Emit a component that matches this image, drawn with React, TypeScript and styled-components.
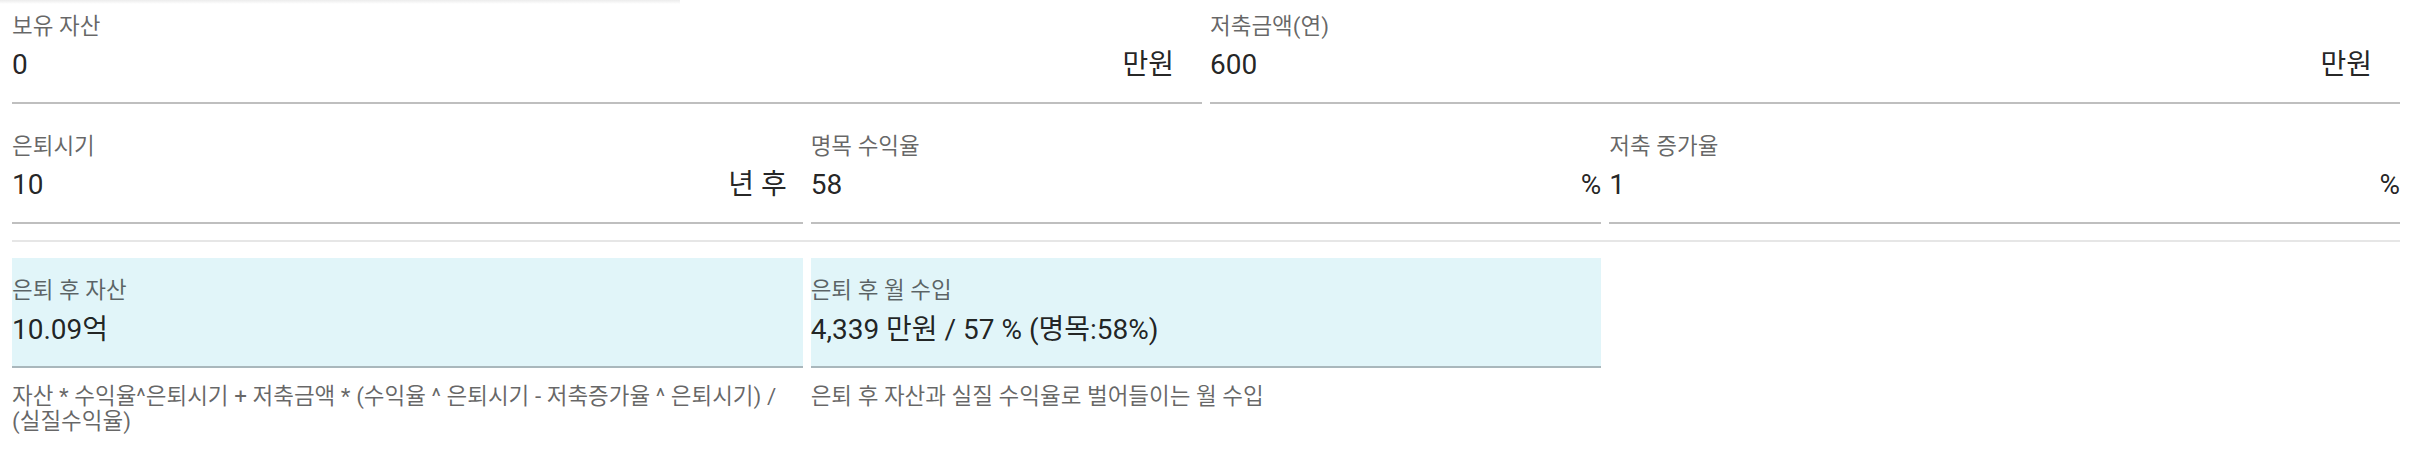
import React from "react";
import styled, { createGlobalStyle } from "styled-components";

const GlobalStyle = createGlobalStyle`
  html, body {
    margin: 0;
    padding: 0;
    background: #ffffff;
  }
  body {
    font-family: Roboto, "Noto Sans CJK KR", "Noto Sans", sans-serif;
    color: rgba(0, 0, 0, 0.87);
  }
`;

const Page = styled.div`
  position: relative;
  width: 2424px;
  box-sizing: border-box;
  padding: 0 24px 0 12px;
`;

/* faint shadow of the bar above, lying over the page's top edge */
const TopShadow = styled.div`
  position: absolute;
  top: 0;
  left: 0;
  width: 680px;
  height: 4px;
  background: linear-gradient(#ececec, rgba(255, 255, 255, 0));
`;

const FieldRow = styled.div<{ $cols: number }>`
  display: grid;
  grid-template-columns: repeat(${(p) => p.$cols}, 1fr);
  column-gap: 8px;
  margin-bottom: 16px;
`;

const Field = styled.div`
  display: flex;
  flex-direction: column;
  padding-top: 14px;
  border-bottom: 2px solid #bfbfbf;
`;

const Label = styled.div`
  font-size: 22.5px;
  line-height: 24px;
  height: 24px;
  color: rgba(0, 0, 0, 0.6);
  white-space: nowrap;
`;

const ValueRow = styled.div`
  display: flex;
  align-items: center;
  justify-content: space-between;
  margin-top: 7px;
  height: 40px;
  padding-bottom: 17px;
`;

const Value = styled.span`
  font-size: 28px;
  line-height: 40px;
  color: rgba(0, 0, 0, 0.87);
`;

const Unit = styled.span<{ $trail: number }>`
  font-size: 28px;
  line-height: 40px;
  color: rgba(0, 0, 0, 0.87);
  margin-right: ${(p) => p.$trail}px;
  white-space: nowrap;
`;

const Divider = styled.hr`
  margin: 0 0 16px 0;
  border: none;
  border-top: 2px solid #e6e6e6;
  height: 0;
`;

const ResultGrid = styled.div`
  display: grid;
  grid-template-columns: repeat(3, 1fr);
  column-gap: 8px;
`;

const ResultItem = styled.div`
  display: flex;
  flex-direction: column;
`;

const ResultBox = styled.div`
  background: #e1f5f9;
  border-bottom: 2px solid #a9b7bc;
  padding: 20px 0 16px 0;
  display: flex;
  flex-direction: column;
`;

const ResultValue = styled.div`
  font-size: 28px;
  line-height: 40px;
  margin-top: 8px;
  color: rgba(0, 0, 0, 0.87);
  white-space: nowrap;
`;

const Helper = styled.div`
  margin-top: 16px;
  font-size: 22.5px;
  line-height: 25px;
  color: rgba(0, 0, 0, 0.6);
`;

type InputDef = { label: string; value: string; unit: string; trail: number };

const row1: InputDef[] = [
  { label: "보유 자산", value: "0", unit: "만원", trail: 28 },
  { label: "저축금액(연)", value: "600", unit: "만원", trail: 28 },
];

const row2: InputDef[] = [
  { label: "은퇴시기", value: "10", unit: "년 후", trail: 16 },
  { label: "명목 수익율", value: "58", unit: "%", trail: 0 },
  { label: "저축 증가율", value: "1", unit: "%", trail: 0 },
];

const results = [
  {
    label: "은퇴 후 자산",
    value: "10.09억",
    helper:
      "자산 * 수익율^은퇴시기 + 저축금액 * (수익율 ^ 은퇴시기 - 저축증가율 ^ 은퇴시기) / (실질수익율)",
  },
  {
    label: "은퇴 후 월 수입",
    value: "4,339 만원 / 57 % (명목:58%)",
    helper: "은퇴 후 자산과 실질 수익율로 벌어들이는 월 수입",
  },
];

function InputField({ label, value, unit, trail }: InputDef) {
  return (
    <Field>
      <Label>{label}</Label>
      <ValueRow>
        <Value>{value}</Value>
        <Unit $trail={trail}>{unit}</Unit>
      </ValueRow>
    </Field>
  );
}

export default function App() {
  return (
    <>
      <GlobalStyle />
      <Page>
        <TopShadow />
        <FieldRow $cols={2}>
          {row1.map((f) => (
            <InputField key={f.label} {...f} />
          ))}
        </FieldRow>
        <FieldRow $cols={3}>
          {row2.map((f) => (
            <InputField key={f.label} {...f} />
          ))}
        </FieldRow>
        <Divider />
        <ResultGrid>
          {results.map((r) => (
            <ResultItem key={r.label}>
              <ResultBox>
                <Label>{r.label}</Label>
                <ResultValue>{r.value}</ResultValue>
              </ResultBox>
              <Helper>{r.helper}</Helper>
            </ResultItem>
          ))}
        </ResultGrid>
      </Page>
    </>
  );
}
